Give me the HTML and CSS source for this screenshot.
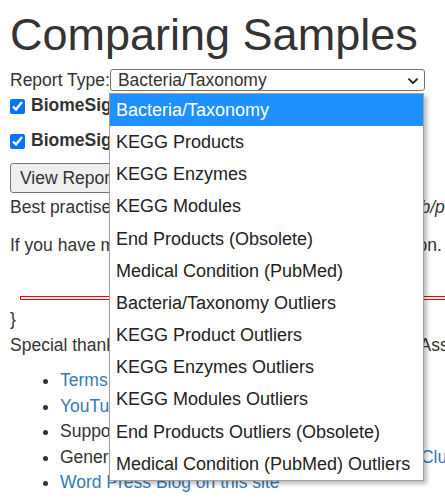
FILE: index.html
```html
<!DOCTYPE html>
<html lang="en">
<head>
<meta charset="utf-8">
<title>Comparing Samples</title>
<link rel="stylesheet" href="styles.css">
</head>
<body>
<div class="page">
  <h1 class="title">Comparing Samples</h1>
  <div class="report-row">
    <label class="report-label" for="rt">Report Type:</label>
    <div class="select-wrap">
      <select class="report-select" id="rt">
        <option selected>Bacteria/Taxonomy</option>
        <option>KEGG Products</option>
        <option>KEGG Enzymes</option>
        <option>KEGG Modules</option>
        <option>End Products (Obsolete)</option>
        <option>Medical Condition (PubMed)</option>
        <option>Bacteria/Taxonomy Outliers</option>
        <option>KEGG Product Outliers</option>
        <option>KEGG Enzymes Outliers</option>
        <option>KEGG Modules Outliers</option>
        <option>End Products Outliers (Obsolete)</option>
        <option>Medical Condition (PubMed) Outliers</option>
      </select>
      <svg class="chevron" width="10" height="7" viewBox="0 0 10 7" aria-hidden="true">
        <polyline points="1,1.2 5,5.2 9,1.2" fill="none" stroke="#222" stroke-width="1.9" stroke-linecap="round" stroke-linejoin="round"/>
      </svg>
    </div>
  </div>
  <div class="check-row first">
    <input type="checkbox" class="check" checked>
    <span class="check-label">BiomeSight Sample 1 (2021-03-04)</span>
  </div>
  <div class="check-row">
    <input type="checkbox" class="check" checked>
    <span class="check-label">BiomeSight Sample 2 (2021-06-12)</span>
  </div>
  <button class="view-btn" type="button">View Report</button>
  <p class="line">Best practise is to compare samples from one lab <i>web/page</i></p>
  <p class="line">If you have multiple samples, you can select this option.</p>
  <hr class="red-rule">
  <p class="line brace">}<br>Special thanks to our members, beta testers and the Association of Gut Health</p>
  <ul class="links">
    <li><a href="#">Terms and Conditions</a></li>
    <li><a href="#">YouTube Channel</a></li>
    <li>Support: support@biomesight.com</li>
    <li>General discussion and user questions on our <a href="#">Club</a></li>
    <li><a href="#">Word Press Blog on this site</a></li>
  </ul>

  <div class="dropdown">
    <div class="opt active">Bacteria/Taxonomy</div>
    <div class="opt">KEGG Products</div>
    <div class="opt">KEGG Enzymes</div>
    <div class="opt">KEGG Modules</div>
    <div class="opt">End Products (Obsolete)</div>
    <div class="opt">Medical Condition (PubMed)</div>
    <div class="opt">Bacteria/Taxonomy Outliers</div>
    <div class="opt">KEGG Product Outliers</div>
    <div class="opt">KEGG Enzymes Outliers</div>
    <div class="opt">KEGG Modules Outliers</div>
    <div class="opt">End Products Outliers (Obsolete)</div>
    <div class="opt">Medical Condition (PubMed) Outliers</div>
  </div>
</div>
</body>
</html>
```
FILE: styles.css
```css
html, body {
  margin: 0;
  padding: 0;
  background: #fff;
  overflow: hidden;
}

.page {
  position: relative;
  padding-left: 10px;
  font-family: "Liberation Sans", Arial, sans-serif;
  font-size: 17.5px;
  line-height: 25.5px;
  color: #333;
  white-space: nowrap;
  width: 435px;
  height: 498px;
  overflow: hidden;
}

.title {
  margin: 10px 0 0;
  font-size: 45px;
  line-height: 50px;
  font-weight: normal;
  color: #333;
}

.report-row {
  margin-top: 9px;
  display: flex;
  align-items: center;
  height: 22px;
}

.report-label {
  line-height: 22px;
}

.select-wrap {
  position: relative;
  width: 315px;
  height: 22px;
}

.report-select {
  appearance: none;
  -webkit-appearance: none;
  display: block;
  width: 315px;
  height: 22px;
  margin: 0;
  padding: 0 0 0 7px;
  font-family: inherit;
  font-size: 17.5px;
  line-height: 20px;
  color: #333;
  background: #fff;
  border: 1px solid #767676;
  border-radius: 3px;
}

.chevron {
  position: absolute;
  right: 7px;
  top: 9px;
  pointer-events: none;
}

.check-row {
  display: flex;
  align-items: center;
  height: 20px;
  margin-top: 15px;
}

.check-row.first {
  margin-top: 5px;
}

.check {
  width: 15px;
  height: 15px;
  margin: 0 6px 0 0;
  accent-color: #0075ff;
}

.check-label {
  font-weight: bold;
}

.view-btn {
  display: block;
  margin: 12px 0 2px;
  height: 30px;
  padding: 0 9px;
  font-family: inherit;
  font-size: 17.5px;
  color: #333;
  background: #efefef;
  border: 1px solid #767676;
  border-radius: 3px;
}

.line {
  margin: 0 0 12.5px;
}

.line i {
  font-style: italic;
}

.red-rule {
  margin: 37.5px 0 7px 10px;
  height: 2px;
  border: 1px solid #ff0000;
  background: #fff4f4;
  width: 500px;
}

.brace {
  margin-bottom: 10px;
}

.links {
  margin: 0;
  padding-left: 50px;
}

.links a {
  color: #337ab7;
  text-decoration: none;
}

.dropdown {
  position: absolute;
  left: 109px;
  top: 93px;
  width: 313px;
  background: #fff;
  border: 1px solid #a0a0a0;
  box-shadow: 3px 3px 4px rgba(0, 0, 0, 0.25);
  font-size: 18px;
  color: #222;
}

.opt {
  height: 32.17px;
  line-height: 32px;
  padding-left: 6px;
}

.opt.active {
  background: #1e90ff;
  color: #fff;
}
```
